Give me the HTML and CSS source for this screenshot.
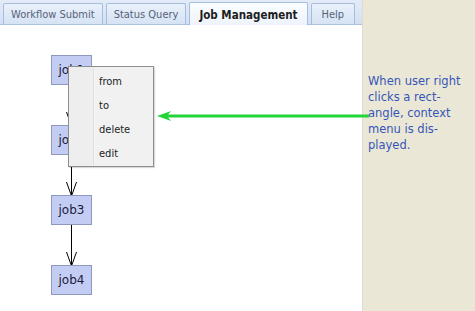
FILE: index.html
```html
<!DOCTYPE html>
<html>
<head>
<meta charset="utf-8">
<link rel="stylesheet" href="styles.css">
</head>
<body>
<div class="page">
  <div class="main">
    <div class="tabbar">
      <div class="tab">Workflow Submit</div>
      <div class="tab">Status Query</div>
      <div class="tab active">Job Management</div>
      <div class="tab wide">Help</div>
    </div>
    <div class="canvas">
      <svg class="edges" width="362" height="286" viewBox="0 0 362 286">
        <g stroke="#000" stroke-width="1" fill="none">
          <line x1="71.5" y1="60" x2="71.5" y2="101"/>
          <polyline points="66.5,87 71.5,101 76.5,87"/>
          <line x1="71.5" y1="130" x2="71.5" y2="171"/>
          <polyline points="66.5,157 71.5,171 76.5,157"/>
          <line x1="71.5" y1="200" x2="71.5" y2="241"/>
          <polyline points="66.5,227 71.5,241 76.5,227"/>
        </g>
      </svg>
      <div class="node n1">job1</div>
      <div class="node n2">job2</div>
      <div class="node n3">job3</div>
      <div class="node n4">job4</div>
      <div class="menu">
        <div class="item">from</div>
        <div class="item">to</div>
        <div class="item">delete</div>
        <div class="item">edit</div>
      </div>
    </div>
  </div>
  <div class="side">
    <p class="note">When user right clicks a rect-angle, context menu is dis-played.</p>
  </div>
  <svg class="pointer" width="215" height="12" viewBox="0 0 215 12">
    <line x1="8" y1="6" x2="212" y2="6" stroke="#22d63a" stroke-width="3"/>
    <polygon points="0,6 14,1 10,6 14,11" fill="#22d63a"/>
  </svg>
</div>
</body>
</html>
```

FILE: styles.css
```css
html, body {
  margin: 0;
  padding: 0;
  background: #fff;
}
.page {
  position: relative;
  display: flex;
  width: 475px;
  height: 311px;
  overflow: hidden;
  font-family: "DejaVu Sans", Verdana, sans-serif;
}
.main {
  width: 362px;
  display: flex;
  flex-direction: column;
  background: #fff;
}
.tabbar {
  height: 24px;
  display: flex;
  align-items: flex-end;
  gap: 3px;
  padding-left: 3px;
  background: linear-gradient(#e3ebf7, #d3e0f2);
  border-bottom: 1px solid #a9c0e0;
}
.tab {
  height: 21px;
  box-sizing: border-box;
  padding: 1px 7px 0;
  display: flex;
  align-items: center;
  font-size: 11px;
  color: #56627a;
  background: linear-gradient(#e9f0fa, #d6e3f4);
  border: 1px solid #a7bddc;
  border-bottom: none;
  border-radius: 2px 2px 0 0;
  font-family: "DejaVu Sans Condensed", "DejaVu Sans", sans-serif;
}
.tab.wide {
  padding: 1px 10px 0;
}
.tab.active {
  color: #1d1d1d;
  font-weight: bold;
  font-size: 11.5px;
  padding: 1px 9px 0;
  background: linear-gradient(#fbfdff, #eef3fb);
  margin-bottom: -1px;
  height: 23px;
}
.canvas {
  position: relative;
  flex: 1;
}
.edges {
  position: absolute;
  left: 0;
  top: 0;
}
.node {
  position: absolute;
  left: 51px;
  width: 41px;
  height: 30px;
  box-sizing: border-box;
  background: #c3cdf4;
  border: 1px solid #8e99bd;
  display: flex;
  align-items: center;
  justify-content: center;
  font-size: 12px;
  color: #1a1a3a;
}
.n1 { top: 30px; }
.n2 { top: 100px; }
.n3 { top: 170px; }
.n4 { top: 240px; }
.menu {
  position: absolute;
  left: 68px;
  top: 41px;
  width: 86px;
  height: 101px;
  box-sizing: border-box;
  padding-top: 3px;
  background: linear-gradient(90deg, #eeeeee 0, #eeeeee 24px, #e0e0e0 24px, #e0e0e0 25px, #fafafa 25px, #f1f1f1 26px);
  border: 1px solid #8e8e8e;
  box-shadow: 1px 1px 1px rgba(0,0,0,0.15);
}
.item {
  height: 24px;
  line-height: 24px;
  padding-left: 30px;
  font-size: 11px;
  color: #222;
  font-family: "DejaVu Sans Condensed", "DejaVu Sans", sans-serif;
}
.side {
  flex: 1;
  background: #ebe7d6;
  border-left: 1px solid #e2ddcb;
  padding: 73px 2px 0 5px;
}
.note {
  margin: 0;
  font-size: 11.5px;
  line-height: 16px;
  color: #3556b8;
  width: 100px;
}
.pointer {
  position: absolute;
  left: 157px;
  top: 110px;
}
```
